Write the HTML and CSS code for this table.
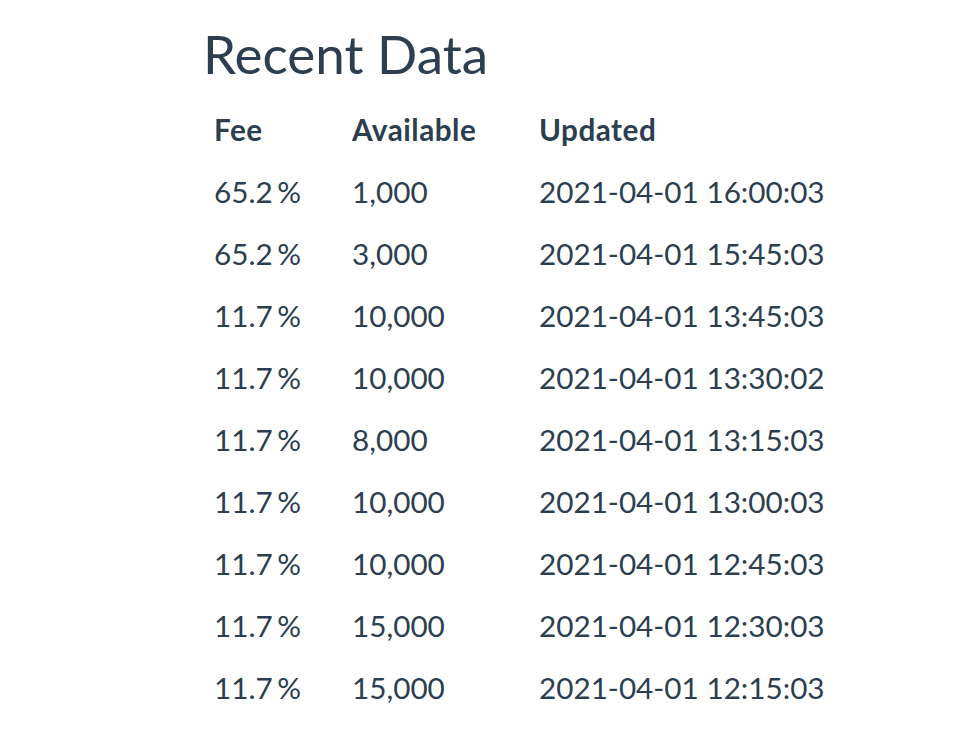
FILE: index.html
```html
<!DOCTYPE html>
<html>
<head>
<meta charset="utf-8">
<link rel="stylesheet" href="styles.css">
</head>
<body>
<div class="wrap">
  <h1 class="title">Recent Data</h1>
  <table class="data">
    <thead>
      <tr><th class="c-fee">Fee</th><th class="c-avail">Available</th><th>Updated</th></tr>
    </thead>
    <tbody>
      <tr><td class="fee">65.2 %</td><td>1,000</td><td>2021-04-01 16:00:03</td></tr>
      <tr><td class="fee">65.2 %</td><td>3,000</td><td>2021-04-01 15:45:03</td></tr>
      <tr><td class="fee">11.7 %</td><td>10,000</td><td>2021-04-01 13:45:03</td></tr>
      <tr><td class="fee">11.7 %</td><td>10,000</td><td>2021-04-01 13:30:02</td></tr>
      <tr><td class="fee">11.7 %</td><td>8,000</td><td>2021-04-01 13:15:03</td></tr>
      <tr><td class="fee">11.7 %</td><td>10,000</td><td>2021-04-01 13:00:03</td></tr>
      <tr><td class="fee">11.7 %</td><td>10,000</td><td>2021-04-01 12:45:03</td></tr>
      <tr><td class="fee">11.7 %</td><td>15,000</td><td>2021-04-01 12:30:03</td></tr>
      <tr><td class="fee">11.7 %</td><td>15,000</td><td>2021-04-01 12:15:03</td></tr>
    </tbody>
  </table>
</div>
</body>
</html>
```
FILE: styles.css
```css
html, body {
  margin: 0;
  padding: 0;
  background: #ffffff;
}
body {
  font-family: Lato, "Open Sans", sans-serif;
  color: #2c3e50;
}
.wrap {
  padding: 22px 0 0 202px;
}
.title {
  font-size: 53px;
  font-weight: 400;
  line-height: 64px;
  margin: 0 0 13px 1px;
}
.data {
  border-collapse: collapse;
  font-size: 29.7px;
}
.data th, .data td {
  text-align: left;
  padding: 13px 0 13px 12px;
  line-height: 36px;
  white-space: nowrap;
}
.data th {
  font-weight: 700;
  letter-spacing: 0.5px;
}
.data .fee {
  word-spacing: -3px;
}
.c-fee {
  width: 126px;
}
.c-avail {
  width: 175px;
}
```
